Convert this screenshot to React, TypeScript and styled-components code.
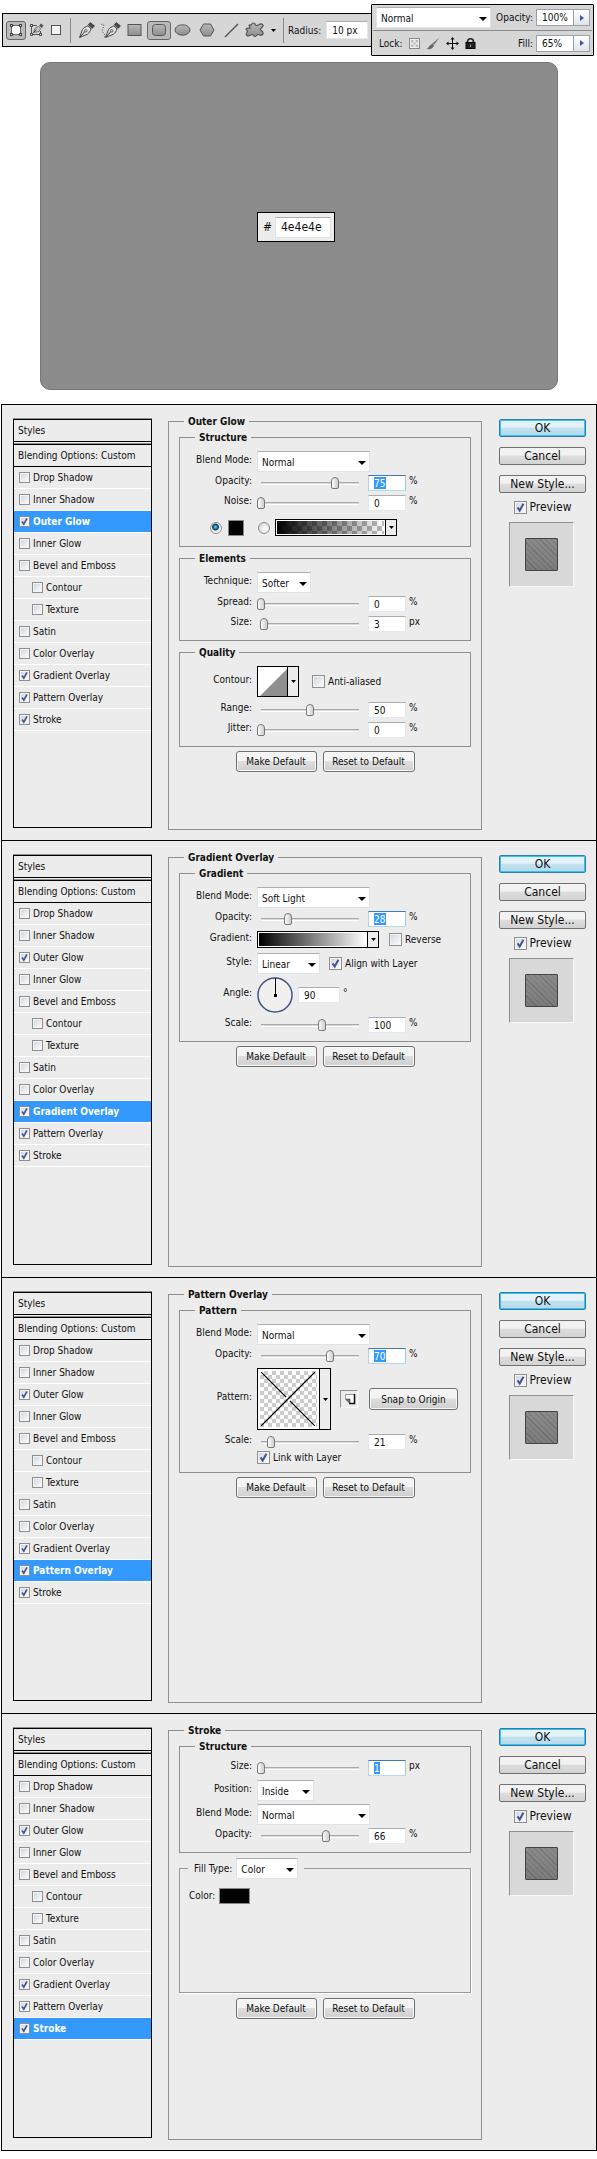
import React, { useId } from "react";
import styled, { createGlobalStyle, css } from "styled-components";

const GlobalStyle = createGlobalStyle`
  * { box-sizing: border-box; }
  body {
    margin: 0;
    background: #fff;
    color: #111;
    font-family: "DejaVu Sans Condensed", "DejaVu Sans", Tahoma, sans-serif;
    font-size: 10px;
    line-height: 15px;
  }
  input, select, button { font: inherit; color: inherit; margin: 0; }
`;

/* ---------- header bars ---------- */

const Header = styled.header`
  display: flex;
  align-items: center;
  padding: 4px 3px 0 2px;
`;

const ToolBar = styled.div`
  display: flex;
  align-items: center;
  flex: 1;
  min-width: 0;
  height: 34px;
  padding-left: 3px;
  background: #d6d6d6;
  border: solid #000;
  border-width: 1px 0 1px 1px;
`;

const ToolButton = styled.button<{ $pressed?: boolean; $wide?: boolean }>`
  display: flex;
  align-items: center;
  justify-content: center;
  flex: none;
  width: ${(p) => (p.$wide ? 24 : 20)}px;
  height: 19px;
  padding: 0;
  background: ${(p) => (p.$pressed ? "#b9b9b9" : "transparent")};
  border: 1px solid ${(p) => (p.$pressed ? "#666" : "transparent")};
  border-radius: 3px;
`;

const MenuArrowButton = styled.button`
  display: flex;
  align-items: center;
  justify-content: center;
  width: 12px;
  height: 19px;
  padding: 0;
  border: 0;
  background: none;
`;

const Separator = styled.span`
  width: 1px;
  height: 25px;
  margin: 0 4px;
  background: #8a8a8a;
`;

const BarLabel = styled.label`
  white-space: nowrap;
`;

const RadiusInput = styled.input`
  width: 42px;
  height: 18px;
  margin-left: 5px;
  padding: 0 5px;
  background: #fff;
  border: 1px solid #e3e9ef;
  border-top-color: #abadb3;
`;

const LayersPanel = styled.div`
  flex: none;
  width: 223px;
  height: 52px;
  padding: 0 1px;
  background: #d6d6d6;
  border: 1px solid #000;
  border-radius: 1px;
`;

const LayersRow = styled.div`
  display: flex;
  align-items: center;
  justify-content: space-between;
  height: 25px;
  padding: 0 2px 0 3px;
  & + & { border-top: 1px solid #8a8a8a; }
`;

const Cluster = styled.div<{ $gap?: number }>`
  display: flex;
  align-items: center;
  gap: ${(p) => p.$gap ?? 3}px;
`;

const LockGroup = styled(Cluster)`
  padding-left: 3px;
`;

const LockButton = styled.button`
  display: flex;
  padding: 0;
  border: 0;
  background: none;
`;

const PercentBox = styled.span`
  display: flex;
  height: 17px;
  border: 1px solid #9aa0aa;
  background: #fff;
`;

const PercentInput = styled.input`
  width: 36px;
  padding: 0 0 0 5px;
  border: 0;
  background: none;
`;

const PercentArrow = styled.button`
  display: flex;
  align-items: center;
  justify-content: center;
  width: 16px;
  padding: 0;
  border: 0;
  border-left: 1px solid #9aa0aa;
  background: linear-gradient(#fff, #e0e3ea);
`;

/* ---------- canvas preview ---------- */

const Canvas = styled.section`
  display: flex;
  align-items: center;
  justify-content: center;
  height: 328px;
  margin: 6px 39px 14px 40px;
  padding: 2px 6px 0 0;
  background: #8b8b8b;
  border: 1px solid #777;
  border-radius: 10px;
`;

const HexBox = styled.label`
  display: flex;
  align-items: center;
  justify-content: space-between;
  width: 78px;
  height: 30px;
  padding: 0 3px 0 5px;
  background: #ececec;
  border: 1px solid #000;
  font-size: 12px;
`;

const HexInput = styled.input`
  width: 56px;
  height: 21px;
  padding: 0 5px;
  background: #fff;
  border: 1px solid #dde1e8;
  border-top-color: #abadb3;
  font-size: 12px;
`;

/* ---------- layer style dialog ---------- */

const Dialogs = styled.main`
  margin-left: 1px;
  border: solid #000;
  border-width: 0 1px 1px;
`;

const DialogBox = styled.section`
  display: grid;
  grid-template-columns: 139px minmax(0, 1fr) 87px;
  min-height: 436px;
  padding: 9px 10px 10px 11px;
  background: #ececec;
  border-top: 1px solid #000;
  &:nth-child(even) { min-height: 437px; }
`;

const StyleList = styled.div`
  margin: 5px 0 2px;
  border: 1px solid #000;
  box-shadow: 0 -1px 0 #8f8f8f;
`;

const ListTitle = styled.div`
  height: 22px;
  padding: 3px 4px;
  border-bottom: 1px solid #000;
`;

const BlendingTitle = styled(ListTitle)`
  height: 23px;
  margin-top: 2px;
  border-top: 1px solid #000;
  box-shadow: 0 -1px 0 #8f8f8f;
`;

const StyleItem = styled.label<{ $selected?: boolean; $indent?: boolean }>`
  display: flex;
  align-items: center;
  gap: 3px;
  height: 22px;
  padding-left: ${(p) => (p.$indent ? 18 : 5)}px;
  border-bottom: 1px solid #fff;
  ${(p) => p.$selected && css`
    background: #39f;
    color: #fff;
    font-weight: bold;
  `}
`;

const CheckWrap = styled.span<{ $size: number }>`
  position: relative;
  flex: none;
  width: ${(p) => p.$size}px;
  height: ${(p) => p.$size}px;
  input {
    display: block;
    appearance: none;
    width: 100%;
    height: 100%;
    background: linear-gradient(135deg, #cdd3dd, #fff);
    border: 1px solid #8e8f8f;
    box-shadow: inset 0 0 0 1px #f4f4f4;
  }
  svg {
    position: absolute;
    inset: 0;
    width: 100%;
    height: 100%;
    visibility: hidden;
    pointer-events: none;
  }
  input:checked + svg { visibility: visible; }
`;

const Outer = styled.fieldset`
  min-width: 0;
  margin: 0 17px 0 16px;
  padding: 1px 10px 0;
  border: 1px solid #8f8f8f;
`;

const Group = styled.fieldset<{ $roomy?: boolean }>`
  min-width: 0;
  margin: 0 0 4px;
  padding: 6px 0 ${(p) => (p.$roomy ? 10 : 8)}px;
  border: 1px solid #8f8f8f;
`;

const Legend = styled.legend`
  height: 15px;
  margin-left: 15px;
  padding: 0 4px;
  font-weight: bold;
`;

const OuterLegend = styled(Legend)`
  margin-left: 5px;
`;

const FillGroup = styled.fieldset`
  min-width: 0;
  height: 135px;
  margin: 5px 0 5px;
  padding: 9px 0 0;
  border: 1px solid #999;
  box-shadow: 1px 1px 0 #fff;
`;

const FillLegend = styled.legend`
  display: flex;
  align-items: center;
  gap: 4px;
  height: 21px;
  margin-left: 8px;
  padding: 0 6px;
`;

const FillRow = styled(Cluster)`
  padding-left: 9px;
`;

const Row = styled.div<{ $gap?: number }>`
  display: flex;
  align-items: center;
  margin-top: ${(p) => p.$gap ?? 4}px;
  &:first-of-type { margin-top: 0; }
`;

const RowLabel = styled.label`
  flex: none;
  width: 72px;
  height: 16px;
  margin-right: 5px;
  padding-bottom: 4px;
  line-height: 12px;
  text-align: right;
  white-space: nowrap;
`;

const FieldLabel = styled.label`
  line-height: 12px;
`;

const SelectWrap = styled.span<{ $width: number }>`
  position: relative;
  flex: none;
  width: ${(p) => p.$width}px;
  height: 21px;
  select {
    appearance: none;
    display: block;
    width: 100%;
    height: 100%;
    padding: 2px 4px 0;
    background: #fff;
    border: 1px solid #dfe3ea;
    border-top-color: #abadb3;
    border-radius: 1px;
    outline: 0;
  }
  svg {
    position: absolute;
    top: 10px;
    right: 4px;
    pointer-events: none;
  }
`;

const Range = styled.input`
  appearance: none;
  flex: none;
  width: 106px;
  height: 14px;
  background: linear-gradient(#a9a9a9 0 1px, #dadada 1px 2px, #fff 2px 3px) no-repeat center / 98px 3px;
  &::-webkit-slider-thumb {
    appearance: none;
    width: 8px;
    height: 12px;
    background: linear-gradient(90deg, #fff, #e3e3e3 50%, #cfcfcf);
    border: 1px solid #777;
    border-radius: 4px 4px 2px 2px;
  }
`;

const ValueInput = styled.input<{ $mark?: number; $width?: number }>`
  flex: none;
  width: ${(p) => p.$width ?? 38}px;
  height: 16px;
  margin: 0 3px 0 5px;
  padding: 0 0 0 5px;
  background: #fff;
  border: 1px solid #e3e9ef;
  border-top-color: #abadb3;
  outline: 0;
  ${(p) => p.$mark && css`
    color: #fff;
    background: linear-gradient(#39f, #39f) no-repeat 5px 1px / ${p.$mark}px 12px, #fff;
    border-color: #3d7bad #a4c9e3 #b7d9ed #b5cfe7;
  `}
`;

const Unit = styled.span`
  padding-bottom: 4px;
  line-height: 12px;
`;

const CheckLabel = styled.label<{ $left?: number }>`
  display: flex;
  align-items: center;
  gap: 3px;
  height: 13px;
  margin-left: ${(p) => p.$left ?? 0}px;
  white-space: nowrap;
`;

const ColourRow = styled(Row)`
  gap: 14px;
  padding-left: 30px;
`;

const Radio = styled.input`
  appearance: none;
  width: 12px;
  height: 12px;
  border: 1px solid #8e8f8f;
  border-radius: 50%;
  background: radial-gradient(circle at 60% 60%, #fff, #c9cdd2);
  &:checked {
    background: radial-gradient(circle at 45% 40%, #7ad4f7 0, #1a6f9f 2px, #12405f 3px, #f2f2f2 4px);
  }
`;

const Swatch = styled.button<{ $wide?: boolean }>`
  width: ${(p) => (p.$wide ? 31 : 16)}px;
  height: 16px;
  padding: 0;
  background: #040304;
  border: 1px solid #8a8a8a;
`;

const PickerButton = styled.button<{ $width: number; $height: number }>`
  display: flex;
  flex: none;
  width: ${(p) => p.$width}px;
  height: ${(p) => p.$height}px;
  padding: 0;
  background: #ececec;
  border: 1px solid #000;
`;

const checker = (size: number, tone: string) =>
  `repeating-conic-gradient(${tone} 0 25%, #fff 0 50%) 0 0 / ${size}px ${size}px`;

const GradientFill = styled.span<{ $transparent?: boolean }>`
  flex: 1;
  align-self: stretch;
  border: 1px solid #fff;
  background: ${(p) =>
    p.$transparent
      ? `linear-gradient(90deg, #000, transparent), ${checker(10, "#bbb")}`
      : "linear-gradient(90deg, #000, #fff)"};
`;

const PatternFill = styled.span`
  flex: 1;
  align-self: stretch;
  padding: 1px;
  border: 2px solid #fff;
  background: ${checker(8, "#ccc")};
  svg { display: block; }
`;

const DropCell = styled.span`
  display: flex;
  align-items: center;
  justify-content: center;
  align-self: stretch;
  width: 11px;
  border-left: 1px solid #000;
`;

const Buttons = styled.div`
  display: flex;
  justify-content: center;
  gap: 6px;
`;

const Button = styled.button<{ $width: number; $tall?: boolean }>`
  width: ${(p) => p.$width}px;
  height: ${(p) => (p.$tall ? 22 : 21)}px;
  padding: 0;
  background: linear-gradient(#f4f4f4 0 45%, #dedede 50%, #cfcfcf);
  border: 1px solid #707070;
  border-radius: 3px;
  box-shadow: inset 0 0 0 1px #f8f8f8;
  white-space: nowrap;
`;

const IconButton = styled.button`
  width: 18px;
  height: 18px;
  margin: 0 11px 0 9px;
  padding: 0;
  background: #ececec;
  border: 1px solid #8f8f8f;
  border-right-color: #fff;
  border-bottom-color: #fff;
`;

const Side = styled.aside`
  display: flex;
  flex-direction: column;
  align-items: center;
  padding-top: 5px;
  font-size: 12px;
`;

const SideButton = styled.button<{ $primary?: boolean }>`
  width: 100%;
  height: 18px;
  margin-bottom: 10px;
  padding: 0;
  border: 1px solid #707070;
  border-radius: 2px;
  background: linear-gradient(#f2f2f2 0 45%, #dedede 50%, #d2d2d2);
  line-height: 15px;
  white-space: nowrap;
  ${(p) => p.$primary && css`
    border-color: #2f7da6;
    background: linear-gradient(#e4f3fa 0 45%, #c3e2f0 50%, #b4d9ea);
    box-shadow: inset 0 0 0 1px #33c3f5;
  `}
`;

const PreviewLabel = styled.label`
  display: flex;
  align-items: center;
  gap: 3px;
  height: 15px;
  margin: -3px 0 7px;
`;

const PreviewBox = styled.div`
  display: flex;
  align-items: center;
  justify-content: center;
  width: 65px;
  height: 65px;
  margin-right: 2px;
  background: #d8d8d8;
  border: 1px solid #8f8f8f;
  border-right-color: #f6f6f6;
  border-bottom-color: #f6f6f6;
`;

const PreviewSwatch = styled.div`
  width: 33px;
  height: 33px;
  border: 1px solid #444;
  border-radius: 1px;
  background: repeating-linear-gradient(45deg, #0000 0 3px, #0002 3px 4px), linear-gradient(#8a8a8a, #7c7c7c);
`;

/* ---------- shared pieces ---------- */

const Down = ({ small }: { small?: boolean }) =>
  small ? (
    <svg width="5" height="3" viewBox="0 0 5 3" aria-hidden="true"><path d="M0 0h5L2.5 3z" /></svg>
  ) : (
    <svg width="8" height="4" viewBox="0 0 8 4" aria-hidden="true"><path d="M0 0h8L4 4z" /></svg>
  );

const Check = ({ size = 13, checked }: { size?: number; checked?: boolean }) => (
  <CheckWrap $size={size}>
    <input type="checkbox" defaultChecked={checked} />
    <svg viewBox="0 0 13 13" aria-hidden="true">
      <path d="M3.6 6.4l2.1 3.2L9.4 2.8" fill="none" stroke="#44568f" strokeWidth="2" />
    </svg>
  </CheckWrap>
);

const Select = ({ id, value, width, label }: { id: string; value: string; width: number; label?: string }) => (
  <SelectWrap $width={width}>
    <select id={id} defaultValue={value} aria-label={label}><option>{value}</option></select>
    <Down />
  </SelectWrap>
);

const SelectRow = ({ label, value, width = 113, gap, children }: {
  label: string; value: string; width?: number; gap?: number; children?: React.ReactNode;
}) => {
  const id = useId();
  return (
    <Row $gap={gap}>
      <RowLabel htmlFor={id}>{label}</RowLabel>
      <Select id={id} value={value} width={width} />
      {children}
    </Row>
  );
};

const SliderRow = ({ label, value, unit, max = 100, mark, gap }: {
  label: string; value: number; unit: string; max?: number; mark?: number; gap?: number;
}) => {
  const id = useId();
  return (
    <Row $gap={gap}>
      <RowLabel htmlFor={id}>{label}</RowLabel>
      <Range type="range" aria-label={label} max={max} defaultValue={value} />
      <ValueInput id={id} defaultValue={value} $mark={mark} />
      <Unit>{unit}</Unit>
    </Row>
  );
};

const STYLES: [string, boolean, boolean?][] = [
  ["Drop Shadow", false],
  ["Inner Shadow", false],
  ["Outer Glow", true],
  ["Inner Glow", false],
  ["Bevel and Emboss", false],
  ["Contour", false, true],
  ["Texture", false, true],
  ["Satin", false],
  ["Color Overlay", false],
  ["Gradient Overlay", true],
  ["Pattern Overlay", true],
  ["Stroke", true],
];

const Dialog = ({ title, children }: { title: string; children: React.ReactNode }) => (
  <DialogBox>
    <StyleList>
      <ListTitle>Styles</ListTitle>
      <BlendingTitle>Blending Options: Custom</BlendingTitle>
      {STYLES.map(([name, on, indent]) => (
        <StyleItem key={name} $selected={name === title} $indent={indent}>
          <Check size={11} checked={on} />
          {name}
        </StyleItem>
      ))}
    </StyleList>
    <Outer>
      <OuterLegend>{title}</OuterLegend>
      {children}
      <Buttons>
        <Button type="button" $width={81}>Make Default</Button>
        <Button type="button" $width={92}>Reset to Default</Button>
      </Buttons>
    </Outer>
    <Side>
      <SideButton type="button" $primary>OK</SideButton>
      <SideButton type="button">Cancel</SideButton>
      <SideButton type="button">New Style...</SideButton>
      <PreviewLabel><Check checked />Preview</PreviewLabel>
      <PreviewBox><PreviewSwatch /></PreviewBox>
    </Side>
  </DialogBox>
);

/* ---------- tool icons ---------- */

const ShapeLayerIcon = () => (
  <svg width="14" height="14" viewBox="0 0 14 14">
    <rect x="3" y="3" width="8" height="8" fill="#fafafa" />
    <path d="M2.500 4v6M11.500 4v6M4 2.500h6M4 11.500h6" stroke="#666" />
    <g fill="#ddd" stroke="#444">
      <rect x="1.500" y="1.500" width="2" height="2" /><rect x="10.500" y="1.500" width="2" height="2" />
      <rect x="1.500" y="10.500" width="2" height="2" /><rect x="10.500" y="10.500" width="2" height="2" />
    </g>
  </svg>
);

const PathsIcon = () => (
  <svg width="15" height="14" viewBox="0 0 15 14">
    <g fill="#ddd" stroke="#555">
      <path d="M2.500 4v6M4 2.500h4M4 11.500h6M11.500 8v2" fill="none" />
      <rect x="1.500" y="1.500" width="2" height="2" /><rect x="1.500" y="10.500" width="2" height="2" />
      <rect x="10.500" y="10.500" width="2" height="2" />
    </g>
    <path d="M4.500 9.500L6 5.500l3.500-2 2 2-1.500 3z" fill="#ccc" stroke="#555" strokeWidth=".8" />
    <path d="M10 2.800l2-2.300 2.500 2-1.700 2.500z" fill="#555" />
    <path d="M4.500 9.500l3-3" stroke="#444" />
  </svg>
);

const FillPixelsIcon = () => (
  <svg width="11" height="11" viewBox="0 0 11 11">
    <rect x=".5" y=".5" width="9" height="9" fill="#f4f4f4" stroke="#555" />
  </svg>
);

const Nib = () => (
  <>
    <path d="M1.500 15.500L4.500 7.500C6 5.500 8 4.500 10 3.800l3 3.200c-.8 2.200-1.800 4-3.500 5.200z" fill="#ddd" stroke="#4a4a4a" />
    <path d="M10.200 2.800l2-2.300 4.300 3.300-2.300 2.700z" fill="#4a4a4a" stroke="#333" strokeWidth=".6" />
    <path d="M2 15l5.200-5.800" stroke="#333" />
    <circle cx="7.800" cy="8.800" r="1.200" fill="#eee" stroke="#333" strokeWidth=".7" />
  </>
);

const PenIcon = () => (
  <svg width="18" height="17" viewBox="0 0 18 17"><Nib /></svg>
);

const FreePenIcon = () => (
  <svg width="21" height="17" viewBox="-3 0 21 17">
    <path d="M-2.500 2.500c1.500-1.500 3 .5 2 2.500s-2 4 0 6 0 4 2 5" fill="none" stroke="#444" strokeDasharray="1 1.500" />
    <Nib />
  </svg>
);

const shape = { fill: "url(#tool-shape)", stroke: "#555" };

const RectIcon = () => (
  <svg width="16" height="13" viewBox="0 0 16 13">
    <defs>
      <linearGradient id="tool-shape" x2="0" y2="1">
        <stop stopColor="#b9b9b9" />
        <stop offset="1" stopColor="#8d8d8d" />
      </linearGradient>
    </defs>
    <rect x="1" y=".5" width="13" height="11" {...shape} />
  </svg>
);
const RoundRectIcon = () => (
  <svg width="16" height="13" viewBox="0 0 16 13"><rect x="1.500" y=".5" width="13" height="11" rx="3" {...shape} /></svg>
);
const EllipseIcon = () => (
  <svg width="18" height="13" viewBox="0 0 18 13"><ellipse cx="8.500" cy="6" rx="7.500" ry="5.200" {...shape} /></svg>
);
const HexagonIcon = () => (
  <svg width="16" height="14" viewBox="0 0 16 14"><path d="M4.500 1h7L15 7l-3.500 6h-7L1 7z" {...shape} /></svg>
);
const LineIcon = () => (
  <svg width="15" height="15" viewBox="0 0 15 15"><path d="M1 14L14 1" stroke="#555" strokeWidth="1.500" /></svg>
);
const BlobIcon = () => (
  <svg width="20" height="16" viewBox="0 0 20 16">
    <path d="M5 3C7 3.500 6.500 1 8.500 1s1.500 3 3.500 2.500S15.500.8 17.500 2.500 16 5.500 15.500 7s3.500 2.500 2.500 5-3.500.5-5 .5-1.500 2-3 2-1.500-2-3-2-3 2.500-5 1 .5-3.500.5-4.500S0 7.500 1.500 6.500 5 7 5 6 3 2.500 5 3z" {...shape} strokeWidth="1.200" />
  </svg>
);

const LockTransparencyIcon = () => (
  <svg width="11" height="11" viewBox="0 0 11 11">
    <rect x=".5" y=".5" width="10" height="10" fill="#eee" stroke="#888" />
    <path d="M2 2h2.500v2.500H2zM6.500 2H9v2.500H6.500zM4.500 4.500h2v2h-2zM2 6.500h2.500V9H2zM6.500 6.500H9V9H6.500z" fill="#bbb" />
  </svg>
);
const BrushIcon = () => (
  <svg width="14" height="13" viewBox="0 0 14 13">
    <path d="M13.500.5L8 8 6.200 6.500z" fill="#777" />
    <path d="M6.500 7l1.500 1.500C7 11.500 4 12.800.5 11.800 3 11.200 3.500 7.500 6.500 7z" fill="#666" />
  </svg>
);
const MoveIcon = () => (
  <svg width="13" height="13" viewBox="0 0 13 13">
    <path d="M6.500 1v11M1 6.500h11" stroke="#111" />
    <path d="M6.500 0L4.500 2.500h4zM6.500 13l-2-2.500h4zM0 6.500l2.500-2v4zM13 6.500l-2.500-2v4z" fill="#111" />
  </svg>
);
const LockIcon = () => (
  <svg width="11" height="11" viewBox="0 0 11 11">
    <path d="M2.500 5V3.800a3 3 0 016 0V5" fill="none" stroke="#222" strokeWidth="1.600" />
    <rect x="1" y="4.500" width="9" height="6" fill="#222" stroke="#000" />
    <path d="M5.500 6.500v2.500" stroke="#999" />
  </svg>
);

const PercentField = ({ label, value }: { label: string; value: string }) => {
  const id = useId();
  return (
    <Cluster>
      <BarLabel htmlFor={id}>{label}</BarLabel>
      <PercentBox>
        <PercentInput id={id} defaultValue={value} />
        <PercentArrow type="button" aria-label={`${label} slider`}>
          <svg width="4" height="6" viewBox="0 0 4 6"><path d="M0 0l4 3-4 3z" fill="#3d55a5" /></svg>
        </PercentArrow>
      </PercentBox>
    </Cluster>
  );
};

export default function App() {
  return (
    <>
      <GlobalStyle />
      <Header>
        <ToolBar role="toolbar">
          <ToolButton $pressed aria-label="Shape layers"><ShapeLayerIcon /></ToolButton>
          <ToolButton aria-label="Paths"><PathsIcon /></ToolButton>
          <ToolButton aria-label="Fill pixels"><FillPixelsIcon /></ToolButton>
          <Separator />
          <ToolButton $wide aria-label="Pen"><PenIcon /></ToolButton>
          <ToolButton $wide aria-label="Freeform pen"><FreePenIcon /></ToolButton>
          <ToolButton $wide aria-label="Rectangle"><RectIcon /></ToolButton>
          <ToolButton $wide $pressed aria-label="Rounded rectangle"><RoundRectIcon /></ToolButton>
          <ToolButton $wide aria-label="Ellipse"><EllipseIcon /></ToolButton>
          <ToolButton $wide aria-label="Polygon"><HexagonIcon /></ToolButton>
          <ToolButton $wide aria-label="Line"><LineIcon /></ToolButton>
          <ToolButton $wide aria-label="Custom shape"><BlobIcon /></ToolButton>
          <MenuArrowButton aria-label="Shape options"><Down small /></MenuArrowButton>
          <Separator />
          <BarLabel htmlFor="radius">Radius:</BarLabel>
          <RadiusInput id="radius" defaultValue="10 px" />
        </ToolBar>
        <LayersPanel>
          <LayersRow>
            <Select id="layer-mode" label="Layer blend mode" value="Normal" width={115} />
            <PercentField label="Opacity:" value="100%" />
          </LayersRow>
          <LayersRow>
            <LockGroup $gap={6}>
              <span>Lock:</span>
              <LockButton aria-label="Lock transparent pixels"><LockTransparencyIcon /></LockButton>
              <LockButton aria-label="Lock image pixels"><BrushIcon /></LockButton>
              <LockButton aria-label="Lock position"><MoveIcon /></LockButton>
              <LockButton aria-label="Lock all"><LockIcon /></LockButton>
            </LockGroup>
            <PercentField label="Fill:" value="65%" />
          </LayersRow>
        </LayersPanel>
      </Header>

      <Canvas>
        <HexBox>#<HexInput defaultValue="4e4e4e" /></HexBox>
      </Canvas>

      <Dialogs>
        <Dialog title="Outer Glow">
          <Group $roomy>
            <Legend>Structure</Legend>
            <SelectRow label="Blend Mode:" value="Normal" />
            <SliderRow label="Opacity:" value={75} unit="%" mark={12} gap={3} />
            <SliderRow label="Noise:" value={0} unit="%" />
            <ColourRow $gap={8}>
              <Cluster $gap={6}>
                <Radio type="radio" name="glow-fill" aria-label="Solid color" defaultChecked />
                <Swatch type="button" aria-label="Glow color" />
              </Cluster>
              <Cluster $gap={5}>
                <Radio type="radio" name="glow-fill" aria-label="Gradient" />
                <PickerButton type="button" aria-label="Glow gradient" $width={122} $height={17}>
                  <GradientFill $transparent />
                  <DropCell><Down small /></DropCell>
                </PickerButton>
              </Cluster>
            </ColourRow>
          </Group>
          <Group>
            <Legend>Elements</Legend>
            <SelectRow label="Technique:" value="Softer" width={54} />
            <SliderRow label="Spread:" value={0} unit="%" gap={3} />
            <SliderRow label="Size:" value={3} unit="px" />
          </Group>
          <Group>
            <Legend>Quality</Legend>
            <Row>
              <RowLabel as="span">Contour:</RowLabel>
              <PickerButton type="button" aria-label="Contour" $width={42} $height={31}>
                <svg width="29" height="29" viewBox="0 0 29 29"><path d="M0 0h29v29H0z" fill="#fff" /><path d="M2 29L29 2v27z" fill="#8f8f8f" /></svg>
                <DropCell><Down small /></DropCell>
              </PickerButton>
              <CheckLabel $left={13}><Check />Anti-aliased</CheckLabel>
            </Row>
            <SliderRow label="Range:" value={50} unit="%" gap={5} />
            <SliderRow label="Jitter:" value={0} unit="%" />
          </Group>
        </Dialog>

        <Dialog title="Gradient Overlay">
          <Group>
            <Legend>Gradient</Legend>
            <SelectRow label="Blend Mode:" value="Soft Light" />
            <SliderRow label="Opacity:" value={28} unit="%" mark={12} gap={3} />
            <Row>
              <RowLabel as="span">Gradient:</RowLabel>
              <PickerButton type="button" aria-label="Gradient" $width={122} $height={17}>
                <GradientFill />
                <DropCell><Down small /></DropCell>
              </PickerButton>
              <CheckLabel $left={10}><Check />Reverse</CheckLabel>
            </Row>
            <SelectRow label="Style:" value="Linear" width={63} gap={5}>
              <CheckLabel $left={9}><Check checked />Align with Layer</CheckLabel>
            </SelectRow>
            <Row $gap={3}>
              <RowLabel htmlFor="angle">Angle:</RowLabel>
              <svg width="36" height="36" viewBox="0 0 36 36" aria-hidden="true">
                <circle cx="18" cy="18" r="17" fill="#f1f0ee" stroke="#3f5687" strokeWidth="1.500" />
                <path d="M18.500 1v17" stroke="#000" /><path d="M17 17h3v3h-3z" />
              </svg>
              <ValueInput id="angle" defaultValue="90" $width={42} />
              <Unit>°</Unit>
            </Row>
            <SliderRow label="Scale:" value={100} max={160} unit="%" />
          </Group>
        </Dialog>

        <Dialog title="Pattern Overlay">
          <Group>
            <Legend>Pattern</Legend>
            <SelectRow label="Blend Mode:" value="Normal" />
            <SliderRow label="Opacity:" value={70} unit="%" mark={12} gap={3} />
            <Row>
              <RowLabel as="span">Pattern:</RowLabel>
              <PickerButton type="button" aria-label="Pattern" $width={74} $height={62}>
                <PatternFill>
                  <svg width="54" height="54" viewBox="0 0 54 54">
                    <path d="M0 0l25 25M29 29l25 25M54 0L29 25M25 29L0 54M25 29l4-4" stroke="#000" strokeWidth="1.200" />
                  </svg>
                </PatternFill>
                <DropCell><Down small /></DropCell>
              </PickerButton>
              <IconButton type="button" aria-label="New preset">
                <svg width="16" height="16" viewBox="0 0 16 16">
                  <path d="M4.500 3.500h9v9h-5l-4-4z" fill="#fff" stroke="#999" />
                  <path d="M13.500 3v9.500H8" fill="none" stroke="#111" strokeWidth="1.500" />
                  <path d="M5 8h4v4z" fill="#777" stroke="#333" strokeWidth=".6" />
                </svg>
              </IconButton>
              <Button type="button" $width={89} $tall>Snap to Origin</Button>
            </Row>
            <SliderRow label="Scale:" value={21} max={210} unit="%" />
            <Row $gap={1}><CheckLabel $left={77}><Check checked />Link with Layer</CheckLabel></Row>
          </Group>
        </Dialog>

        <Dialog title="Stroke">
          <Group>
            <Legend>Structure</Legend>
            <SliderRow label="Size:" value={1} max={250} unit="px" mark={6} />
            <SelectRow label="Position:" value="Inside" width={57} />
            <SelectRow label="Blend Mode:" value="Normal" gap={3} />
            <SliderRow label="Opacity:" value={66} unit="%" gap={3} />
          </Group>
          <FillGroup>
            <FillLegend>
              <FieldLabel htmlFor="fill-type">Fill Type:</FieldLabel>
              <Select id="fill-type" value="Color" width={62} />
            </FillLegend>
            <FillRow $gap={4}>
              <FieldLabel htmlFor="stroke-color">Color:</FieldLabel>
              <Swatch id="stroke-color" type="button" $wide />
            </FillRow>
          </FillGroup>
        </Dialog>
      </Dialogs>
    </>
  );
}
